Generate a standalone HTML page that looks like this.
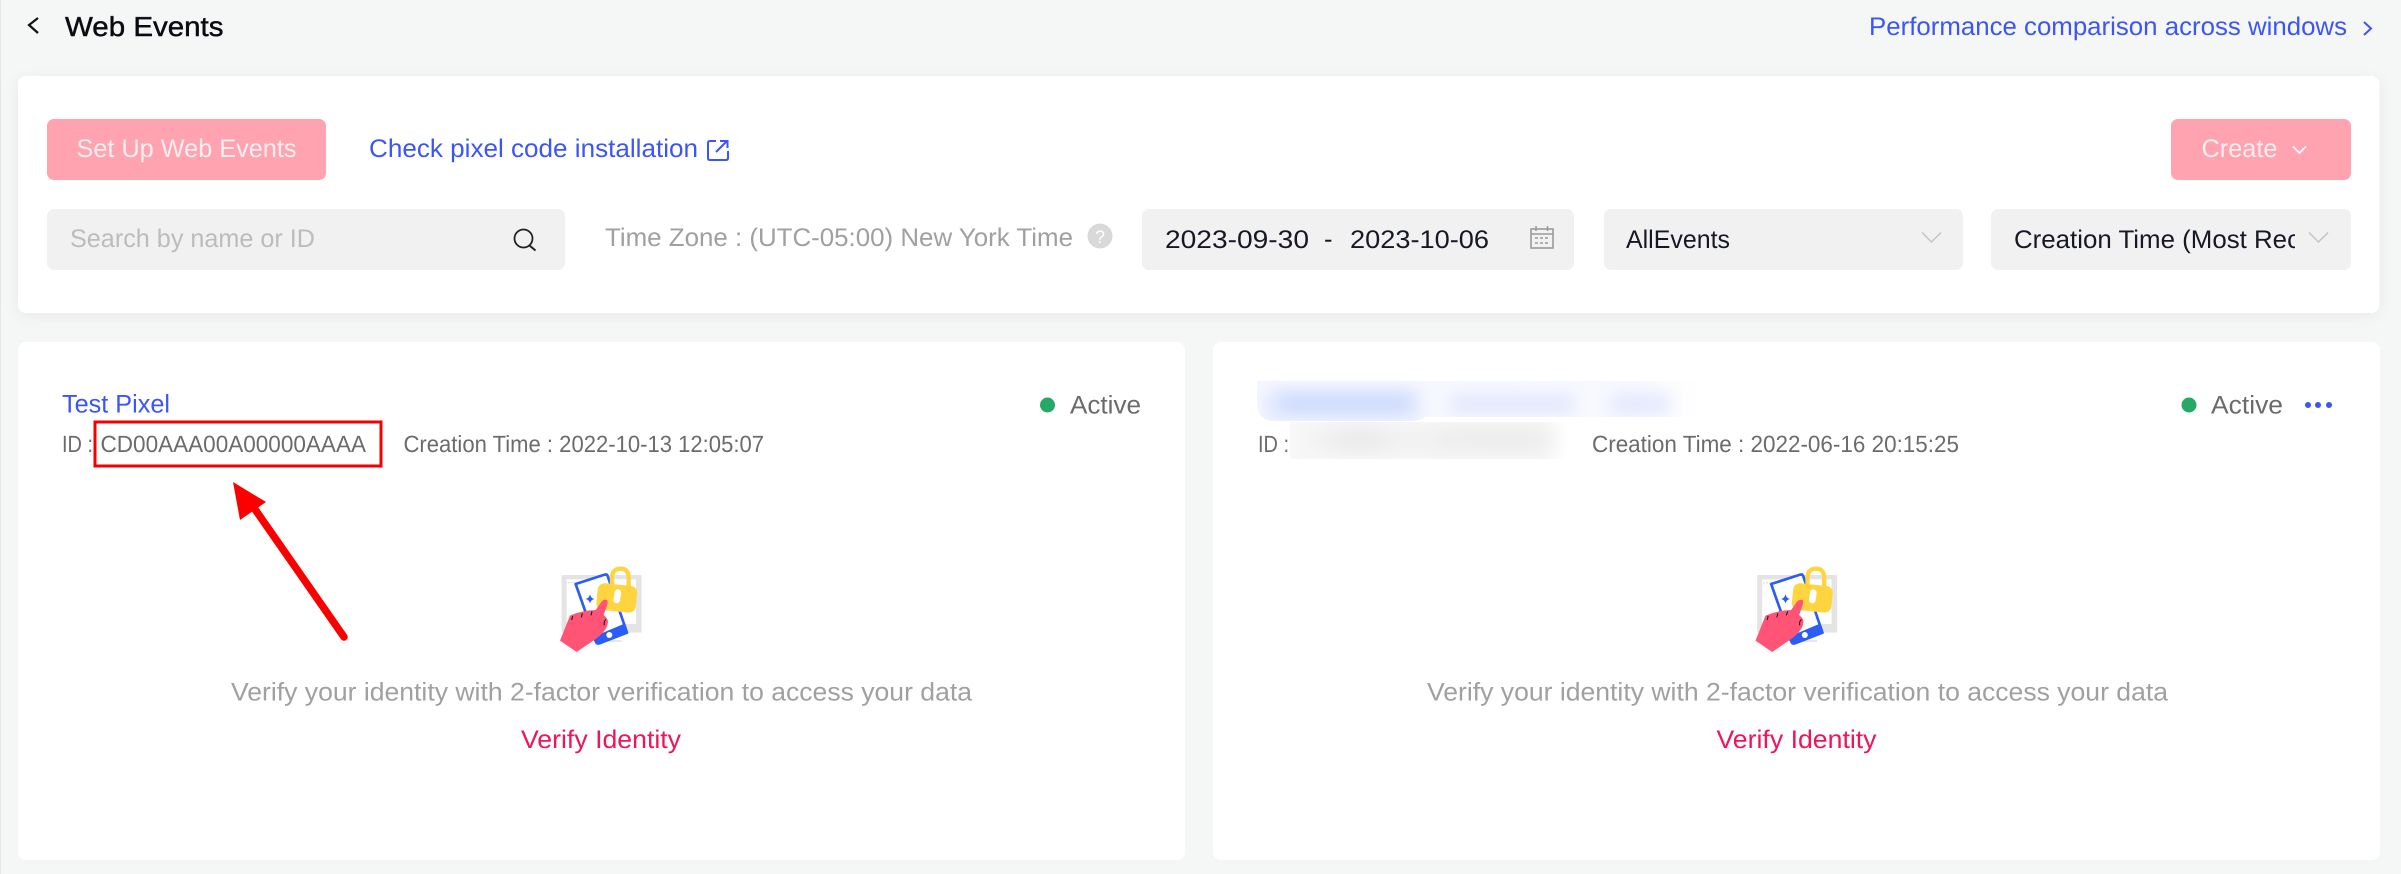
<!DOCTYPE html>
<html lang="en">
<head>
<meta charset="utf-8">
<title>Web Events</title>
<style>
html,body{margin:0;padding:0;width:2401px;height:874px;overflow:hidden;background:#f5f6f6}
svg{display:block;position:absolute;left:0;top:0}
text{font-family:"Liberation Sans",Arial,sans-serif;font-size:25.5px;text-rendering:geometricPrecision}
.id{font-size:23.5px}
</style>
</head>
<body>
<svg width="2401" height="874" viewBox="0 0 2401 874" xmlns="http://www.w3.org/2000/svg">
<defs>
  <filter id="sh" x="-5%" y="-20%" width="110%" height="140%"><feDropShadow dx="0" dy="3" stdDeviation="7" flood-color="#1a2040" flood-opacity=".05"/></filter>
  <filter id="b1" x="-20%" y="-60%" width="140%" height="220%"><feGaussianBlur stdDeviation="8"/></filter>
  <filter id="b2" x="-30%" y="-100%" width="160%" height="300%"><feGaussianBlur stdDeviation="11"/></filter>
  <linearGradient id="fadeB" x1="0" x2="1" y1="0" y2="0">
    <stop offset="0" stop-color="#f6f8ff"/><stop offset=".86" stop-color="#f8f9ff"/><stop offset="1" stop-color="#fff"/>
  </linearGradient>
  <linearGradient id="fadeG" x1="0" x2="1" y1="0" y2="0">
    <stop offset="0" stop-color="#f8f8f8"/><stop offset=".9" stop-color="#f7f7f7"/><stop offset="1" stop-color="#fff"/>
  </linearGradient>
  <clipPath id="cr"><rect x="2010" y="215" width="285" height="50"/></clipPath>
  <clipPath id="blA"><path d="M1257 381H1700V417H1425Q1422 421 1410 421H1275Q1258 421 1257 405Z"/></clipPath>
  <clipPath id="blB"><rect x="1290" y="422" width="278" height="37"/></clipPath>
  <g id="illu">
    <rect x="95" y="75" width="240" height="173" rx="4" fill="#e4e4e4"/>
    <rect x="110" y="88" width="208" height="134" fill="#fff"/>
    <path d="M113 98h5M122 98h5M131 98h4" stroke="#ddd" stroke-width="4"/>
    <path d="M230 273h45" stroke="#ddd" stroke-width="4"/>
    <path d="M137 102L224 74Q231 72 233 78L291 248L208 280Q201 282 198 275Z" fill="#fff" stroke="#2a5cf6" stroke-width="8" stroke-linejoin="round"/>
    <path d="M281 222L295 250L205 284Q197 285 194 276L186 262Z" fill="#2a5cf6"/>
    <circle cx="238" cy="255" r="9" fill="#fff"/>
    <path d="M180 132Q182 145 194 147Q182 149 180 161Q178 149 166 147Q178 145 180 132Z" fill="#2a5cf6"/>
    <path d="M246 112V84Q246 56 272 56Q296 56 296 84V118" fill="none" stroke="#ffd43f" stroke-width="13"/>
    <rect x="201" y="104" width="119" height="80" rx="20" fill="#ffd43f" transform="rotate(6 262 143)"/>
    <rect x="252" y="118" width="20" height="42" rx="10" fill="#fff" transform="rotate(8 262 139)"/>
    <path d="M90 272L120 197Q155 181 197 180L214 156Q222 146 232 151Q235 157 229 172L221 195Q234 206 234 216Q232 244 190 272L140 306Z" fill="#ff5475"/>
    <path d="M128 198l-3 12M157 190l-3 12M186 184l-3 12M228 208q-8 8 -5 18" fill="none" stroke="#111" stroke-width="3"/>
  </g>
</defs>

<rect width="2401" height="874" fill="#f5f6f6"/>
<rect x="0" y="0" width="1" height="874" fill="#e6e6e6"/>

<!-- header -->
<path d="M38 18L29 25L38 33" fill="none" stroke="#111" stroke-width="2.2"/>
<text x="65" y="36" style="font-size:27.5px" fill="#0b0b12" stroke="#0b0b12" stroke-width=".45" textLength="158.5" lengthAdjust="spacingAndGlyphs">Web Events</text>
<text x="1869" y="35" fill="#3b55f6" textLength="478" lengthAdjust="spacingAndGlyphs">Performance comparison across windows</text>
<path d="M2364 22L2371 28.5L2364 35" fill="none" stroke="#3b55f6" stroke-width="2"/>

<!-- filter card -->
<rect x="18" y="76" width="2361.500" height="237" rx="8" fill="#fff" filter="url(#sh)"/>
<rect x="47" y="119" width="279" height="61" rx="7" fill="#ffa3b1"/>
<text x="76.500" y="157" fill="#ffeef1" textLength="220" lengthAdjust="spacingAndGlyphs">Set Up Web Events</text>
<text x="369" y="157" fill="#3b55f6" textLength="329" lengthAdjust="spacingAndGlyphs">Check pixel code installation</text>
<path d="M716 141H710Q708 141 708 143V158Q708 160 710 160H726Q728 160 728 158V151" fill="none" stroke="#3b55f6" stroke-width="2"/>
<path d="M716 152L727 141M720 141H727.500V148" fill="none" stroke="#3b55f6" stroke-width="2"/>
<rect x="2171" y="119" width="180" height="61" rx="7" fill="#ffa3b1"/>
<text x="2201.500" y="157" fill="#ffeef1" textLength="76" lengthAdjust="spacingAndGlyphs">Create</text>
<path d="M2293 146.500L2299.500 153L2306 146.500" fill="none" stroke="#fff" stroke-width="1.800"/>

<rect x="47" y="209" width="518" height="61" rx="7" fill="#f1f1f2"/>
<text x="70" y="247" fill="#bcbcbc" textLength="245" lengthAdjust="spacingAndGlyphs">Search by name or ID</text>
<circle cx="523.500" cy="238.500" r="9" fill="none" stroke="#222" stroke-width="1.800"/>
<path d="M529.500 245.500L535.500 250.500" stroke="#222" stroke-width="2"/>

<text x="605" y="246" fill="#a0a0a0" textLength="468" lengthAdjust="spacingAndGlyphs">Time Zone : (UTC-05:00) New York Time</text>
<circle cx="1100" cy="236" r="12.500" fill="#d9d9d9"/>
<text x="1100" y="243" fill="#fff" text-anchor="middle" style="font-size:18px">?</text>

<rect x="1142" y="209" width="432" height="61" rx="7" fill="#f1f1f2"/>
<text x="1165" y="248" fill="#161823" textLength="144" lengthAdjust="spacingAndGlyphs">2023-09-30</text>
<text x="1324" y="247.500" fill="#161823">-</text>
<text x="1350" y="248" fill="#161823" textLength="139" lengthAdjust="spacingAndGlyphs">2023-10-06</text>
<g fill="none" stroke="#9a9a9a" stroke-width="1.600">
  <rect x="1531" y="229" width="22" height="19"/>
  <path d="M1531 234H1553M1536 226V231M1547.500 226V231"/>
</g>
<path d="M1535 238h3M1540 238h3M1545 238h3M1535 243h3M1540 243h3M1545 243h3" stroke="#9a9a9a" stroke-width="1.600"/>

<rect x="1604" y="209" width="359" height="61" rx="7" fill="#f1f1f2"/>
<text x="1626" y="248" fill="#161823" textLength="104" lengthAdjust="spacingAndGlyphs">AllEvents</text>
<path d="M1922 232.500L1931.500 242L1941 232.500" fill="none" stroke="#c4c4c4" stroke-width="1.500"/>

<rect x="1991" y="209" width="360" height="61" rx="7" fill="#f1f1f2"/>
<g clip-path="url(#cr)"><text x="2014" y="248" fill="#161823" textLength="286" lengthAdjust="spacingAndGlyphs">Creation Time (Most Rec</text></g>
<path d="M2309 232.500L2318.500 242L2328 232.500" fill="none" stroke="#c4c4c4" stroke-width="1.500"/>

<!-- left card -->
<rect x="18" y="342" width="1167" height="518" rx="8" fill="#fff"/>
<text x="62" y="412.500" fill="#3b55f6" textLength="108" lengthAdjust="spacingAndGlyphs">Test Pixel</text>
<text x="62" y="452" fill="#6b6b6b" class="id" textLength="31" lengthAdjust="spacingAndGlyphs">ID :</text>
<text x="100.500" y="452" fill="#6b6b6b" class="id" textLength="265.500" lengthAdjust="spacingAndGlyphs">CD00AAA00A00000AAAA</text>
<text x="403.500" y="452" fill="#6b6b6b" class="id" textLength="360.500" lengthAdjust="spacingAndGlyphs">Creation Time : 2022-10-13 12:05:07</text>
<circle cx="1047.500" cy="405" r="7.500" fill="#27a866"/>
<text x="1070" y="413.500" fill="#6b6b6b" textLength="71" lengthAdjust="spacingAndGlyphs">Active</text>
<use href="#illu" transform="translate(530 550) scale(.3333)"/>
<text x="231" y="700.500" fill="#a0a0a0" textLength="741" lengthAdjust="spacingAndGlyphs">Verify your identity with 2-factor verification to access your data</text>
<text x="521" y="748" fill="#f0145a" textLength="160" lengthAdjust="spacingAndGlyphs">Verify Identity</text>

<!-- annotation -->
<rect x="95" y="422" width="286" height="44" fill="none" stroke="#f40000" stroke-width="3"/>
<path d="M344 637L252 505" fill="none" stroke="#fa0000" stroke-width="7.500" stroke-linecap="round"/>
<path d="M233 482L266 502L240 520Z" fill="#fa0000"/>

<!-- right card -->
<rect x="1213" y="342" width="1167" height="518" rx="8" fill="#fff"/>
<g clip-path="url(#blA)">
  <rect x="1257" y="381" width="443" height="40" fill="url(#fadeB)"/>
  <g filter="url(#b1)">
    <rect x="1262" y="388" width="160" height="34" rx="8" fill="#e6ecfe"/>
    <rect x="1277" y="392" width="136" height="22" rx="8" fill="#cfdcfd"/>
    <rect x="1450" y="394" width="125" height="20" rx="6" fill="#e3e8fc"/>
    <rect x="1610" y="394" width="60" height="20" rx="6" fill="#e3e8fc"/>
  </g>
</g>
<g clip-path="url(#blB)">
  <rect x="1290" y="422" width="278" height="37" fill="url(#fadeG)"/>
  <g filter="url(#b2)">
    <rect x="1305" y="430" width="245" height="20" fill="#efefef"/>
    <rect x="1335" y="432" width="50" height="16" fill="#e4e4e4"/>
    <rect x="1440" y="432" width="110" height="16" fill="#e8e8e8"/>
  </g>
</g>
<text x="1258" y="452" fill="#6b6b6b" class="id" textLength="31" lengthAdjust="spacingAndGlyphs">ID :</text>
<text x="1592" y="452" fill="#6b6b6b" class="id" textLength="367" lengthAdjust="spacingAndGlyphs">Creation Time : 2022-06-16 20:15:25</text>
<circle cx="2189" cy="405" r="7.500" fill="#27a866"/>
<text x="2211" y="413.500" fill="#6b6b6b" textLength="72" lengthAdjust="spacingAndGlyphs">Active</text>
<circle cx="2308" cy="405" r="3" fill="#3b55f6"/>
<circle cx="2318" cy="405" r="3" fill="#3b55f6"/>
<circle cx="2329" cy="405" r="3" fill="#3b55f6"/>
<use href="#illu" transform="translate(1725.500 550) scale(.3333)"/>
<text x="1427" y="700.500" fill="#a0a0a0" textLength="741" lengthAdjust="spacingAndGlyphs">Verify your identity with 2-factor verification to access your data</text>
<text x="1716.500" y="748" fill="#f0145a" textLength="160" lengthAdjust="spacingAndGlyphs">Verify Identity</text>
</svg>
</body>
</html>
